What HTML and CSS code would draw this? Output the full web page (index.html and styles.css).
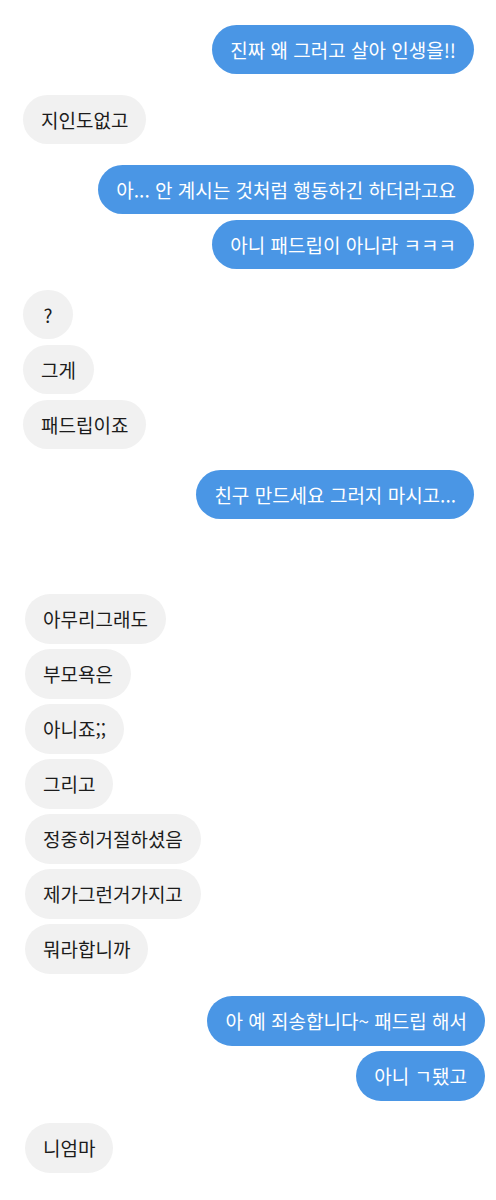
FILE: index.html
```html
<!DOCTYPE html>
<html lang="ko">
<head>
    <meta charset="UTF-8">
    <meta name="viewport" content="width=device-width, initial-scale=1.0">
    <title>대화</title>
    <link rel="stylesheet" href="styles.css">
</head>
<body>

    <!-- 위쪽 대화 -->
    <div class="chat chat-top">
        <div class="group me">
            <div class="bubble">진짜 왜 그러고 살아 인생을!!</div>
        </div>
        <div class="group you">
            <div class="bubble">지인도없고</div>
        </div>
        <div class="group me">
            <div class="bubble">아... 안 계시는 것처럼 행동하긴 하더라고요</div>
            <div class="bubble">아니 패드립이 아니라 ㅋㅋㅋ</div>
        </div>
        <div class="group you">
            <div class="bubble round">?</div>
            <div class="bubble">그게</div>
            <div class="bubble">패드립이죠</div>
        </div>
        <div class="group me">
            <div class="bubble">친구 만드세요 그러지 마시고...</div>
        </div>
    </div>

    <!-- 아래쪽 대화 -->
    <div class="chat chat-bottom">
        <div class="group you">
            <div class="bubble">아무리그래도</div>
            <div class="bubble">부모욕은</div>
            <div class="bubble">아니죠;;</div>
            <div class="bubble">그리고</div>
            <div class="bubble">정중히거절하셨음</div>
            <div class="bubble">제가그런거가지고</div>
            <div class="bubble">뭐라합니까</div>
        </div>
        <div class="group me">
            <div class="bubble">아 예 죄송합니다~ 패드립 해서</div>
            <div class="bubble">아니 ㄱ됐고</div>
        </div>
        <div class="group you">
            <div class="bubble">니엄마</div>
        </div>
    </div>

</body>
</html>
```

FILE: styles.css
```css
body {
    font-family: "Noto Sans CJK KR", "Noto Sans", sans-serif;
    margin: 0;
    background-color: #ffffff;
    width: 496px;
    height: 1200px;
    overflow: hidden;
}

/* Chat sections */
.chat {
    display: flex;
    flex-direction: column;
    gap: 21px;
}

.chat-top {
    padding: 25px 22px 0 23px;
}

.chat-bottom {
    padding: 75px 11px 0 25px;
    gap: 22px;
}

/* Message groups */
.group {
    display: flex;
    flex-direction: column;
    gap: 6px;
}

.chat-bottom .group {
    gap: 5px;
}

.group.me {
    align-items: flex-end;
}

.group.you {
    align-items: flex-start;
}

/* Bubbles */
.bubble {
    padding: 12px 18px;
    font-size: 19px;
    line-height: 25px;
    border-radius: 25px;
    white-space: nowrap;
}

.chat-bottom .bubble {
    line-height: 26px;
}

.me .bubble {
    background-color: #4a96e5;
    color: #ffffff;
}

.you .bubble {
    background-color: #f1f1f1;
    color: #1c1c1c;
}

.bubble.round {
    min-width: 14px;
    text-align: center;
}
```
